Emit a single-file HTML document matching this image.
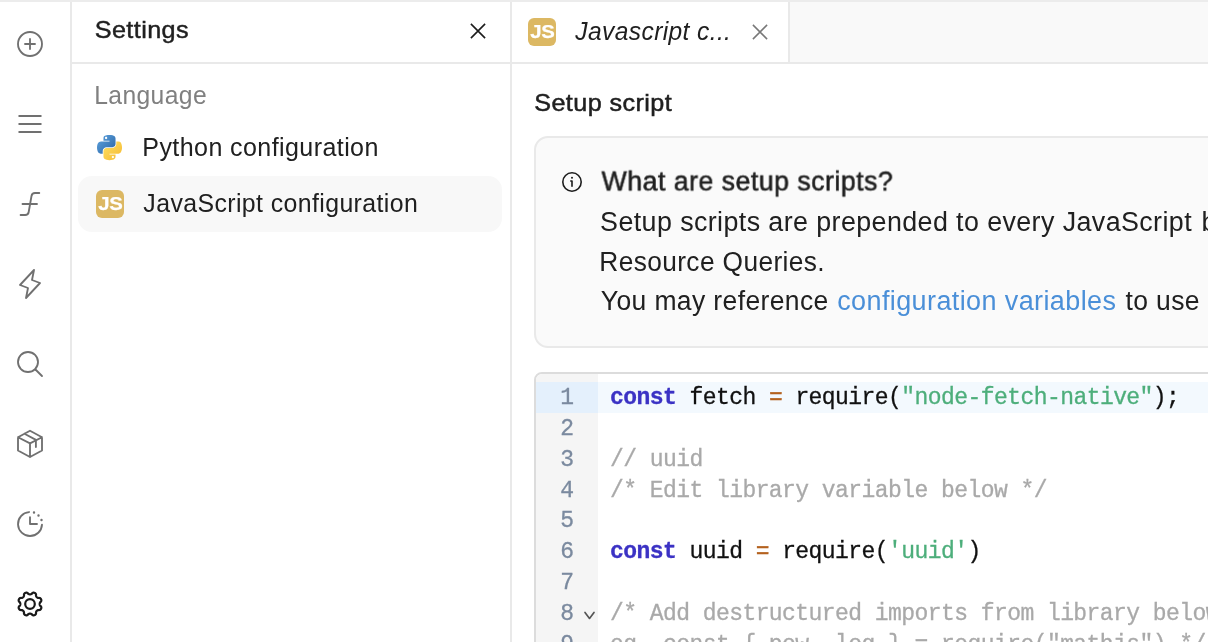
<!DOCTYPE html>
<html lang="en">
<head>
<meta charset="utf-8">
<title>Settings</title>
<style>
*{box-sizing:border-box;margin:0;padding:0}
html,body{width:1208px;height:642px;overflow:hidden;background:#fff}
body{position:relative;font-family:"Liberation Sans",sans-serif;color:#1c1c1c;font-size:24px}
#app{position:absolute;left:0;top:0;width:1208px;height:642px;overflow:hidden;will-change:transform}
.abs{position:absolute}
.t{position:absolute;white-space:nowrap;line-height:1;font-size:24.5px;color:#202020;transform-origin:0 0}
.topline{left:0;top:0;width:1208px;height:2px;background:#ececec;z-index:5}
.rail{left:0;top:0;width:72px;height:642px;border-right:2px solid #e9e9e9;background:#fff}
.rail svg{position:absolute;left:14px;width:32px;height:32px;fill:none;stroke:#707070;stroke-width:1.85;stroke-linecap:round;stroke-linejoin:round}
.panel{left:72px;top:0;width:440px;height:642px;border-right:2px solid #e9e9e9;background:#fff}
.hline{left:72px;top:62px;width:1136px;height:2px;background:#e9e9e9}
.sel{left:78px;top:176px;width:424px;height:56px;border-radius:14px;background:#f8f8f8}
.js{position:absolute;width:28px;height:28px;border-radius:6px;background:#dcb863;color:#fff;font-weight:bold;font-size:19.2px;line-height:28.4px;text-align:center;letter-spacing:-0.3px}
.js span{display:inline-block;transform:scaleX(1.06);-webkit-text-stroke:0.25px #fff}
.tabs{left:512px;top:2px;width:696px;height:60px;background:#f9f9f9}
.tab{left:512px;top:2px;width:278px;height:60px;background:#fff;border-right:2px solid #e9e9e9}
.info{left:534px;top:136px;width:900px;height:212px;border:2px solid #e9e9e9;border-radius:14px;background:#fafafa}
.code{left:534px;top:372px;width:900px;height:400px;border:2px solid #dcdcdc;border-radius:8px;background:#fff;overflow:hidden}
.gutter{left:0;top:0;width:62px;height:400px;background:#f5f5f5}
.aline{left:62px;top:8px;width:900px;height:31px;background:#f3f9fe}
.agut{left:0;top:8px;width:62px;height:31px;background:#e4f0fc}
.mono{font-family:"Liberation Mono",monospace;font-size:23px;letter-spacing:-0.563px;white-space:pre;position:absolute;line-height:30.8px;-webkit-text-stroke:0.3px currentColor}
.ln{color:#7b8a9f;text-align:right;width:37.5px;left:0}
.cl{left:74px;color:#111}
.k{color:#3b32c4;font-weight:bold}
.o{color:#b4621f}
.s{color:#4dae7b}
.c{color:#a9a9a9}
</style>
</head>
<body>
<div id="app">
<div class="abs rail">
  <svg style="top:28px" viewBox="0 0 32 32"><circle cx="16" cy="16" r="12"/><path d="M16 11V21M11 16H21"/></svg>
  <svg style="top:108px" viewBox="0 0 32 32" stroke-linecap="butt"><path d="M4.5 8H27.5M4.5 16H27.5M4.5 24H27.5" stroke-linecap="butt"/></svg>
  <svg style="top:188px" viewBox="0 0 32 32"><path d="M25.3 5H21Q18 5 17.5 8L14.7 24Q14.2 27 11.2 27H6.6M8.5 16H23"/></svg>
  <svg style="top:268px" viewBox="0 0 32 32"><path d="M20 2L6 17L14 20L12 30L26 15L18 12Z"/></svg>
  <svg style="top:348px" viewBox="0 0 32 32"><circle cx="14" cy="14" r="10"/><path d="M21.5 21.5L28 28"/></svg>
  <svg style="top:428px" viewBox="0 0 32 32"><path d="M16 2.8L28 9.2V22.5L16 29L4 22.5V9.2ZM4 9.2L16 15.4L28 9.2M16 15.4V29M10.5 5.7L21.9 11.9V19"/></svg>
  <svg style="top:508px" viewBox="0 0 32 32"><path d="M15 4.05A12 12 0 1 0 28 16.6M16 9.2V16H23"/><path d="M20 4.5h.01M24.5 7.5h.01M27.5 12h.01" stroke-width="2.4"/></svg>
  <svg style="top:588px;stroke:#1a1a1a;stroke-width:2.2" viewBox="0 0 32 32"><path d="M25.65 16.00 L25.68 16.38 L25.75 16.77 L25.89 17.17 L26.10 17.60 L26.64 18.12 L27.16 18.68 L27.30 19.19 L27.33 19.68 L27.27 20.16 L27.13 20.61 L26.91 21.03 L26.62 21.41 L26.25 21.74 L25.79 22.00 L25.02 22.03 L24.27 22.01 L23.82 22.16 L23.44 22.35 L23.11 22.57 L22.82 22.82 L22.57 23.11 L22.35 23.44 L22.16 23.82 L22.01 24.27 L22.03 25.02 L22.00 25.79 L21.74 26.25 L21.41 26.62 L21.03 26.91 L20.61 27.13 L20.16 27.27 L19.68 27.33 L19.19 27.30 L18.68 27.16 L18.12 26.64 L17.60 26.10 L17.17 25.89 L16.77 25.75 L16.38 25.68 L16.00 25.65 L15.62 25.68 L15.23 25.75 L14.83 25.89 L14.40 26.10 L13.88 26.64 L13.32 27.16 L12.81 27.30 L12.32 27.33 L11.84 27.27 L11.39 27.13 L10.97 26.91 L10.59 26.62 L10.26 26.25 L10.00 25.79 L9.97 25.02 L9.99 24.27 L9.84 23.82 L9.65 23.44 L9.43 23.11 L9.18 22.82 L8.89 22.57 L8.56 22.35 L8.18 22.16 L7.73 22.01 L6.98 22.03 L6.21 22.00 L5.75 21.74 L5.38 21.41 L5.09 21.03 L4.87 20.61 L4.73 20.16 L4.67 19.68 L4.70 19.19 L4.84 18.68 L5.36 18.12 L5.90 17.60 L6.11 17.17 L6.25 16.77 L6.32 16.38 L6.35 16.00 L6.32 15.62 L6.25 15.23 L6.11 14.83 L5.90 14.40 L5.36 13.88 L4.84 13.32 L4.70 12.81 L4.67 12.32 L4.73 11.84 L4.87 11.39 L5.09 10.97 L5.38 10.59 L5.75 10.26 L6.21 10.00 L6.98 9.97 L7.73 9.99 L8.18 9.84 L8.56 9.65 L8.89 9.43 L9.18 9.18 L9.43 8.89 L9.65 8.56 L9.84 8.18 L9.99 7.73 L9.97 6.98 L10.00 6.21 L10.26 5.75 L10.59 5.38 L10.97 5.09 L11.39 4.87 L11.84 4.73 L12.32 4.67 L12.81 4.70 L13.32 4.84 L13.88 5.36 L14.40 5.90 L14.83 6.11 L15.23 6.25 L15.62 6.32 L16.00 6.35 L16.38 6.32 L16.77 6.25 L17.17 6.11 L17.60 5.90 L18.12 5.36 L18.68 4.84 L19.19 4.70 L19.68 4.67 L20.16 4.73 L20.61 4.87 L21.03 5.09 L21.41 5.38 L21.74 5.75 L22.00 6.21 L22.03 6.98 L22.01 7.73 L22.16 8.18 L22.35 8.56 L22.57 8.89 L22.82 9.18 L23.11 9.43 L23.44 9.65 L23.82 9.84 L24.27 9.99 L25.02 9.97 L25.79 10.00 L26.25 10.26 L26.62 10.59 L26.91 10.97 L27.13 11.39 L27.27 11.84 L27.33 12.32 L27.30 12.81 L27.16 13.32 L26.64 13.88 L26.10 14.40 L25.89 14.83 L25.75 15.23 L25.68 15.62Z"/><circle cx="16" cy="16" r="4.8"/></svg>
</div>

<div class="abs panel"></div>
<div class="abs tabs"></div>
<div class="abs tab"></div>
<div class="abs hline"></div>
<div class="abs topline"></div>

<!-- settings panel -->
<div class="t" id="t_settings" style="left:94px;top:17px;font-size:24.5px;letter-spacing:0.40px;transform:translate(0.67px,0.50px) scaleX(1.0289);-webkit-text-stroke:0.45px currentColor">Settings</div>
<svg class="abs" style="left:468px;top:20.7px;width:20px;height:20px" viewBox="0 0 20 20" fill="none" stroke="#1c1c1c" stroke-width="1.6"><path d="M2.9 2.9L17.1 17.1M17.1 2.9L2.9 17.1"/></svg>
<div class="t" id="t_language" style="left:94px;top:83px;font-size:25px;letter-spacing:0.40px;transform:translate(0.16px,0.00px) scaleX(0.9864);color:#808080">Language</div>
<svg class="abs" style="left:97px;top:135px;width:25px;height:25.5px" viewBox="0 0 111 113.5" preserveAspectRatio="none">
<defs>
<linearGradient id="pyb" x1="0" y1="0" x2="0.8" y2="0.8"><stop offset="0" stop-color="#5fa6e2"/><stop offset="1" stop-color="#346fae"/></linearGradient>
<linearGradient id="pyy" x1="0.8" y1="0.8" x2="0.2" y2="0.2"><stop offset="0" stop-color="#f7c13c"/><stop offset="1" stop-color="#fbd95a"/></linearGradient>
</defs>
<path fill="url(#pyb)" fill-rule="evenodd" d="M54.92 0C50.34 0.02 45.96 0.41 42.11 1.09C30.76 3.1 28.7 7.29 28.7 15.03V25.25H55.51V28.66H28.7H18.64C10.85 28.66 4.02 33.34 1.89 42.25C-0.57 52.46 -0.68 58.84 1.89 69.5C3.79 77.44 8.35 83.09 16.14 83.09H25.36V70.84C25.36 61.99 33.01 54.19 42.11 54.19H68.89C76.34 54.19 82.29 48.05 82.29 40.56V15.03C82.29 7.77 76.16 2.31 68.89 1.09C64.28 0.33 59.5 -0.02 54.92 0ZM40.42 8.22C43.19 8.22 45.45 10.52 45.45 13.34C45.45 16.16 43.19 18.44 40.42 18.44C37.64 18.44 35.39 16.16 35.39 13.34C35.39 10.52 37.64 8.22 40.42 8.22Z"/>
<path fill="url(#pyy)" fill-rule="evenodd" d="M85.64 28.66V40.56C85.64 49.79 77.81 57.56 68.89 57.56H42.11C34.77 57.56 28.7 63.84 28.7 71.19V96.72C28.7 103.99 35.02 108.26 42.11 110.34C50.59 112.84 58.73 113.29 68.89 110.34C75.64 108.39 82.29 104.46 82.29 96.72V86.5H55.51V83.09H82.29H95.7C103.49 83.09 106.4 77.66 109.11 69.5C111.91 61.1 111.79 53.03 109.11 42.25C107.18 34.49 103.5 28.66 95.7 28.66H85.64ZM70.58 93.31C73.35 93.31 75.61 95.59 75.61 98.41C75.61 101.23 73.35 103.53 70.58 103.53C67.81 103.53 65.54 101.23 65.54 98.41C65.54 95.59 67.81 93.31 70.58 93.31Z"/>
</svg>
<div class="t" id="t_python" style="left:142px;top:135px;font-size:25px;letter-spacing:0.40px;transform:translate(0.30px,0.00px) scaleX(1.0023);">Python configuration</div>
<div class="abs sel"></div>
<div class="js" style="left:96px;top:190px"><span>JS</span></div>
<div class="t" id="t_jsconf" style="left:143px;top:191px;font-size:25px;letter-spacing:0.40px;transform:translate(0.35px,-0.20px) scaleX(0.9943);">JavaScript configuration</div>
<!-- tab -->
<div class="js" style="left:528px;top:18px"><span>JS</span></div>
<div class="t" id="t_tab" style="left:575px;top:18px;font-size:25px;letter-spacing:0.40px;transform:translate(0.37px,0.60px) scaleX(0.9820);font-style:italic">Javascript c...</div>
<svg class="abs" style="left:750px;top:22px;width:20px;height:20px" viewBox="0 0 20 20" fill="none" stroke="#787878" stroke-width="1.5"><path d="M2.9 2.9L17.1 17.1M17.1 2.9L2.9 17.1"/></svg>
<!-- content -->
<div class="t" id="t_setup" style="left:534px;top:90px;font-size:24.5px;letter-spacing:0.40px;transform:translate(0.28px,0.70px) scaleX(1.0268);-webkit-text-stroke:0.5px currentColor">Setup script</div>
<div class="abs info"></div>
<svg class="abs" style="left:560px;top:170px;width:24px;height:24px" viewBox="0 0 24 24" fill="none" stroke="#1c1c1c" stroke-width="1.6" stroke-linecap="round"><circle cx="12" cy="12" r="9.2"/><path d="M10.8 11H12V16.2" stroke-linejoin="round"/><path d="M12 7.8h.01" stroke-width="2"/></svg>
<div class="t" id="t_what" style="left:601px;top:168px;font-size:27px;letter-spacing:0.50px;transform:translate(0.55px,0.50px) scaleX(0.9888);-webkit-text-stroke:0.55px currentColor">What are setup scripts?</div>
<div class="t" id="t_l1" style="left:600px;top:208px;font-size:27px;letter-spacing:0.40px;transform:translate(0.10px,0.70px) scaleX(0.9946);">Setup scripts are prepended to every JavaScript</div>
<div class="t" id="t_l1b" style="left:1201px;top:208px;font-size:27px;letter-spacing:0.40px;transform:translate(0.50px,0.70px) scaleX(1.0000);">block in your app, including JS</div>
<div class="t" id="t_l2" style="left:599px;top:248px;font-size:27px;letter-spacing:0.40px;transform:translate(0.31px,0.50px) scaleX(0.9733);">Resource Queries.</div>
<div class="t" id="t_l3a" style="left:600px;top:288px;font-size:27px;letter-spacing:0.40px;transform:translate(0.81px,0.40px) scaleX(0.9804);">You may reference</div>
<div class="t" id="t_l3b" style="left:837px;top:288px;font-size:27px;letter-spacing:0.40px;transform:translate(0.23px,0.40px) scaleX(0.9991);color:#4a8fd8">configuration variables</div>
<div class="t" id="t_l3c" style="left:1125px;top:288px;font-size:27px;letter-spacing:0.40px;transform:translate(0.40px,0.40px) scaleX(0.9815);">to use</div>
<div class="t" id="t_l3d" style="left:1212px;top:288px;font-size:27px;letter-spacing:0.40px;transform:translate(0.00px,0.40px) scaleX(1.0000);">secrets in your scripts.</div>

<div class="abs code">
  <div class="abs gutter"></div>
  <div class="abs agut"></div>
  <div class="abs aline"></div>
  <div class="mono ln" style="top:9.2px">1
2
3
4
5
6
7
8
9</div>
  <div class="mono cl" style="top:9.2px"><span class="k">const</span> fetch <span class="o">=</span> require(<span class="s">"node-fetch-native"</span>);

<span class="c">// uuid</span>
<span class="c">/* Edit library variable below */</span>

<span class="k">const</span> uuid <span class="o">=</span> require(<span class="s">'uuid'</span>)

<span class="c">/* Add destructured imports from library below</span>
<span class="c">eg. const { pow, log } = require("mathjs") */</span></div>
  <svg class="abs" style="left:46px;top:234.5px;width:16px;height:14px" viewBox="0 0 16 14" fill="none" stroke="#555" stroke-width="1.7" stroke-linecap="round" stroke-linejoin="round"><path d="M3 3.4L7.5 9.4L12 3.4"/></svg>
</div>
</div>
</body>
</html>
